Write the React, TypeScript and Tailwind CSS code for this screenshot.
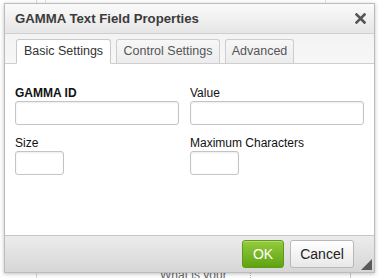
import React from "react";

export default function App() {
  const font = { fontFamily: '"Liberation Sans", Arial, sans-serif' };
  return (
    <div className="relative w-[379px] h-[278px] bg-white overflow-hidden" style={font}>
      {/* faint background page bits */}
      <div className="absolute left-[36px] top-0 w-px h-[278px] bg-[#d8d8d8]" />
      <div className="absolute left-[45px] top-0 w-px h-[6px] bg-[#e4e4e4]" />
      <div className="absolute left-[325px] top-0 w-px h-[6px] bg-[#e4e4e4]" />
      <div className="absolute left-[250px] top-[270px] w-px h-[8px] border-l border-dotted border-[#bbb]" />
      <div className="absolute left-[350px] top-[270px] w-px h-[8px] bg-[#ccc]" />
      <div className="absolute left-[160px] top-[268px] text-[12px] text-[#666] leading-[14px]">What is your</div>

      {/* dialog */}
      <div className="absolute left-[4px] top-[3px] w-[371px] h-[270px] flex flex-col border border-[#bcbcbc] bg-white shadow-[0_1px_4px_rgba(0,0,0,0.25)]">
        {/* title bar */}
        <div className="h-[30px] shrink-0 flex items-center justify-between pl-[10px] pr-[8px] bg-gradient-to-b from-[#fafafa] to-[#e6e6e6] border-b border-[#cfcfcf]">
          <span className="text-[13.2px] font-bold text-[#3b3b3b]">GAMMA Text Field Properties</span>
          <svg width="11" height="11" viewBox="0 0 11 11">
            <path d="M1.5 1.5 L9.5 9.5 M9.5 1.5 L1.5 9.5" stroke="#555" strokeWidth="2.6" strokeLinecap="square" />
          </svg>
        </div>
        {/* tabs */}
        <div className="h-[30px] shrink-0 flex items-end gap-[5px] pl-[11px] bg-gradient-to-b from-[#f3f3f3] to-[#f7f7f7] border-b border-[#cfcfcf]">
          <div className="w-[95px] h-[25px] -mb-px flex items-center justify-center bg-white border border-[#c8c8c8] border-b-white rounded-t-[3px] text-[12.5px] text-[#333]">
            Basic Settings
          </div>
          <div className="w-[104px] h-[24px] flex items-center justify-center bg-gradient-to-b from-[#f7f7f7] to-[#ececec] border border-[#cdcdcd] border-b-0 rounded-t-[3px] text-[12.5px] text-[#555]">
            Control Settings
          </div>
          <div className="w-[69px] h-[24px] flex items-center justify-center bg-gradient-to-b from-[#f7f7f7] to-[#ececec] border border-[#cdcdcd] border-b-0 rounded-t-[3px] text-[12.5px] text-[#555]">
            Advanced
          </div>
        </div>
        {/* content */}
        <div className="flex-1 bg-white pt-[22px] pl-[10px] pr-[10px]">
          <div className="grid grid-cols-[164px_174px] gap-x-[11px] gap-y-[11px]">
            <div className="flex flex-col">
              <label className="text-[12px] font-bold text-[#111] leading-[14px] mb-[1px]">GAMMA ID</label>
              <div className="h-[24px] w-[164px] border border-[#c4c4c4] rounded-[3px] bg-white shadow-[inset_0_1px_2px_rgba(0,0,0,0.08)]" />
            </div>
            <div className="flex flex-col">
              <label className="text-[12px] text-[#111] leading-[14px] mb-[1px]">Value</label>
              <div className="h-[24px] w-[174px] border border-[#c4c4c4] rounded-[3px] bg-white shadow-[inset_0_1px_2px_rgba(0,0,0,0.08)]" />
            </div>
            <div className="flex flex-col">
              <label className="text-[12px] text-[#111] leading-[14px] mb-[1px]">Size</label>
              <div className="h-[24px] w-[49px] border border-[#c4c4c4] rounded-[3px] bg-white shadow-[inset_0_1px_2px_rgba(0,0,0,0.08)]" />
            </div>
            <div className="flex flex-col">
              <label className="text-[12px] text-[#111] leading-[14px] mb-[1px]">Maximum Characters</label>
              <div className="h-[24px] w-[49px] border border-[#c4c4c4] rounded-[3px] bg-white shadow-[inset_0_1px_2px_rgba(0,0,0,0.08)]" />
            </div>
          </div>
        </div>
        {/* footer */}
        <div className="relative h-[37px] shrink-0 flex items-center justify-end gap-[6px] pr-[20px] bg-gradient-to-b from-[#ececec] to-[#d6d6d6] border-t border-[#c6c6c6]">
          <button className="w-[42px] h-[28px] rounded-[3px] border border-[#5f9a16] bg-gradient-to-b from-[#94cb3c] to-[#5ea40e] text-white text-[14px] shadow-[inset_0_1px_0_rgba(255,255,255,0.3)]">
            OK
          </button>
          <button className="w-[64px] h-[28px] rounded-[3px] border border-[#b8b8b8] bg-gradient-to-b from-[#ffffff] to-[#e8e8e8] text-[#222] text-[14px]">
            Cancel
          </button>
          <svg width="11" height="11" viewBox="0 0 11 11" className="absolute right-[2px] bottom-[2px]">
            <path d="M11 0 L11 11 L0 11 Z" fill="#5a5a5a" />
          </svg>
        </div>
      </div>
    </div>
  );
}
